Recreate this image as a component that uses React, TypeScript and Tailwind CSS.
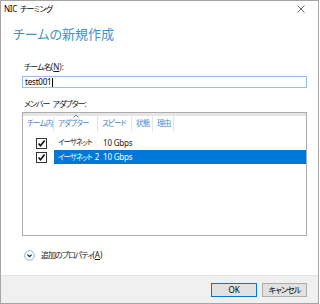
import React from "react";

const font =
  "font-['Noto_Sans','Noto_Sans_CJK_JP',sans-serif] [font-feature-settings:'palt']";

function Check() {
  return (
    <svg width="11" height="11" viewBox="0 0 11 11">
      <rect x="0.5" y="0.5" width="10" height="10" fill="#fff" stroke="#333" />
      <path d="M2.5 5.5 L4.5 7.8 L8.6 2.6" fill="none" stroke="#111" strokeWidth="1.6" />
    </svg>
  );
}

function Row({ name, num, speed, selected }: { name: string; num?: string; speed: string; selected?: boolean }) {
  return (
    <div className="grid grid-cols-[31px_1fr] h-[14px]">
      <div className="h-full flex items-center pl-[13px]">
        <Check />
      </div>
      <div
        className={`grid grid-cols-[45px_1fr] items-center h-full ${
          selected ? "bg-[#0078d7] text-white" : "text-[#1a1a1a]"
        }`}
      >
        <div className="pl-[4px] whitespace-nowrap">
          <span className="text-[7.5px] tracking-[-1px]">{name}</span>
          {num && <span className="ml-[3px] text-[8px]">{num}</span>}
        </div>
        <div className="pl-[4px] whitespace-nowrap text-[8px] tracking-[-0.2px]">{speed}</div>
      </div>
    </div>
  );
}

export default function App() {
  const headers = [
    { label: "チーム内", w: "w-[31px]" },
    { label: "アダプター", w: "w-[44px]" },
    { label: "スピード", w: "w-[34px]" },
    { label: "状態", w: "w-[21px]" },
    { label: "理由", w: "w-[21px]" },
  ];

  return (
    <div className={`w-[320px] h-[304px] bg-white ${font}`}>
      <div className="w-[319px] h-[304px] border border-[#a6a6a6] flex flex-col">
        {/* title bar */}
        <div className="h-[16px] flex items-center justify-between pl-[3px] pr-[13px]">
          <span className="text-[8px] leading-[12px] text-black whitespace-nowrap">
            <span className="tracking-[-0.3px]">NIC</span>
            <span className="ml-[3px] tracking-[-0.8px]">チーミング</span>
          </span>
          <svg width="8" height="8" viewBox="0 0 8 8">
            <path d="M0.5 0.5 L7.5 7.5 M7.5 0.5 L0.5 7.5" stroke="#555" strokeWidth="0.9" />
          </svg>
        </div>

        {/* heading */}
        <div className="mt-[8px] h-[19px] pl-[12px] text-[13px] leading-[19px] text-[#4490c4]">
          チームの新規作成
        </div>

        <div className="pl-[21px] pr-[11px] flex flex-col">
          <div className="mt-[16px] pl-[2px] h-[13px] text-[8px] leading-[13px] text-[#1a1a1a] whitespace-nowrap">
            <span className="tracking-[-0.9px]">チーム名</span>(<span className="underline">N</span>):
          </div>
          <div className="mt-[3px] h-[12px] border border-[#93c0ea] flex items-center pl-[2px] text-[8px] tracking-[-0.2px] text-black">
            test001
            <span className="ml-[1px] w-px h-[9px] bg-black" />
          </div>

          <div className="mt-[9px] pl-[2px] h-[13px] text-[8px] leading-[13px] tracking-[-1px] text-[#1a1a1a] whitespace-nowrap">
            メンバー<span className="ml-[3px]">アダプター:</span>
          </div>

          {/* list */}
          <div className="mt-[2px] h-[124px] border border-[#acacac] flex flex-col text-[7.5px]">
            <div className="h-[3px] bg-[#e6e6e6]" />
            <div className="h-[16px] flex relative">
              {headers.map((h) => (
                <div
                  key={h.label}
                  className={`${h.w} shrink-0 h-full flex items-center pl-[4px] border-r border-[#e5e5e5] text-[#4a87c7] whitespace-nowrap tracking-[-0.8px]`}
                >
                  {h.label}
                </div>
              ))}
              <svg
                className="absolute left-[50px] top-[-2px]"
                width="6"
                height="4"
                viewBox="0 0 6 4"
              >
                <path d="M0.5 3.5 L3 1 L5.5 3.5" fill="none" stroke="#3f87c9" strokeWidth="1" />
              </svg>
            </div>
            <div className="mt-[4px] flex flex-col">
              <Row name="イーサネット" speed="10 Gbps" />
              <Row name="イーサネット" num="2" speed="10 Gbps" selected />
            </div>
          </div>

          <div className="mt-[13px] h-[12px] pl-[2px] flex items-center gap-[6px] text-[8px] text-[#1a1a1a]">
            <svg width="11" height="11" viewBox="0 0 11 11">
              <circle cx="5.5" cy="5.5" r="4.8" fill="#fff" stroke="#7fb0e4" strokeWidth="1" />
              <path d="M3.4 4.6 L5.5 6.7 L7.6 4.6" fill="none" stroke="#1d2a44" strokeWidth="1.3" />
            </svg>
            <span className="whitespace-nowrap">
              <span className="tracking-[-1px]">追加のプロパティ</span>(<span className="underline">A</span>)
            </span>
          </div>
        </div>

        <div className="flex-1" />

        {/* footer */}
        <div className="h-[28px] border-t border-[#e2e2e2] bg-[#f0f0f0] flex justify-end items-start pt-[7px] pr-[11px] gap-[5px] text-[8px] text-black">
          <button className="w-[46px] h-[14px] border border-[#0078d7] bg-[#e1e1e1] flex items-center justify-center leading-none">
            OK
          </button>
          <button className="w-[45px] h-[14px] border border-[#adadad] bg-[#e1e1e1] flex items-center justify-center leading-none tracking-[-0.9px]">
            キャンセル
          </button>
        </div>
      </div>
    </div>
  );
}
